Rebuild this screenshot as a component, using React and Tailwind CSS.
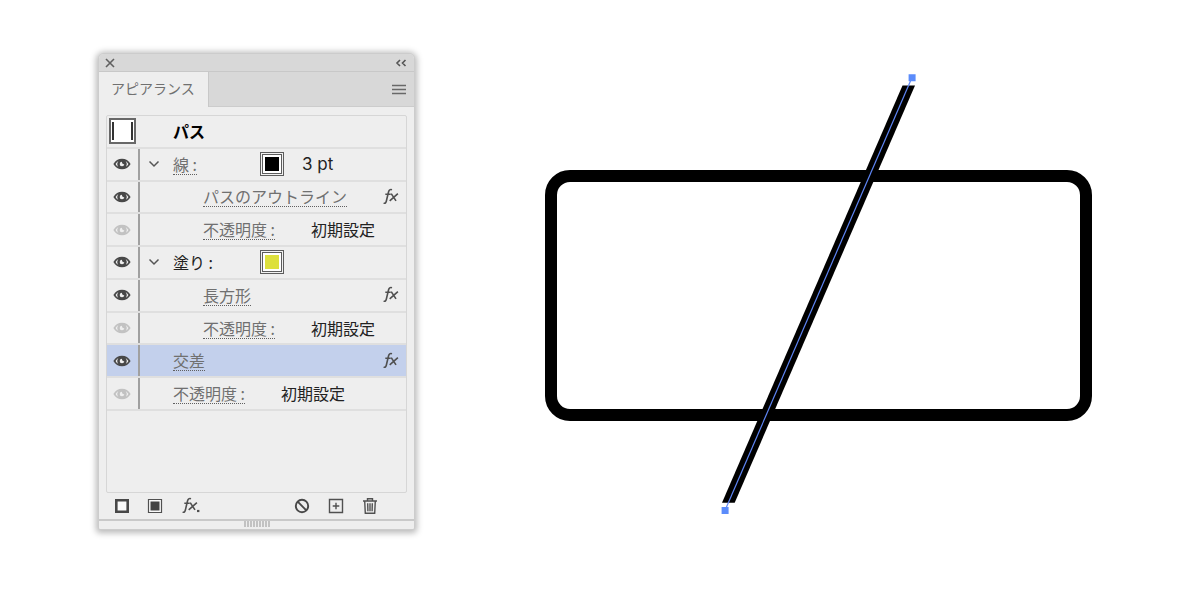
import React from "react";

const ROWS = [
  { id: "stroke", label: "線 :", visible: true, open: true, swatch: "bg-black", value: "3 pt" },
  { id: "outline", label: "パスのアウトライン", visible: true, nested: true, fx: true },
  { id: "stroke-opacity", label: "不透明度 :", visible: false, nested: true, value: "初期設定" },
  { id: "fill", label: "塗り :", visible: true, open: true, plain: true, swatch: "bg-[#dde03c]" },
  { id: "rectangle", label: "長方形", visible: true, nested: true, fx: true },
  { id: "fill-opacity", label: "不透明度 :", visible: false, nested: true, value: "初期設定" },
  { id: "intersect", label: "交差", visible: true, fx: true, selected: true },
  { id: "opacity", label: "不透明度 :", visible: false, value: "初期設定" },
];

function Eye({ visible }) {
  return (
    <svg viewBox="0 0 18 12" className={`h-3 w-[18px] ${visible ? "text-[#484848]" : "text-[#c2c2c2]"}`}>
      <path fill="currentColor" d="M.4 6C2.300 2.600 5.400.7 9 .7s6.700 1.900 8.600 5.300C15.700 9.400 12.600 11.300 9 11.300S2.300 9.400.4 6Z" />
      <path
        fill="#eeeeee"
        d="M2.600 6c.7-1.300 1.500-2.200 2.700-2.800a4.600 4.600 0 0 0 0 5.600C4.100 8.200 3.300 7.300 2.600 6ZM15.400 6c-.7-1.300-1.500-2.200-2.700-2.800a4.600 4.600 0 0 1 0 5.600c1.200-.6 2-1.500 2.700-2.800Z"
      />
      <path fill="#eeeeee" d="M9 3.700a2.300 2.300 0 1 0 2.300 2.500c-1.400.3-2.500-.8-2.300-2.500Z" />
    </svg>
  );
}

function Fx({ menu = false }) {
  return (
    <svg viewBox="0 0 20 20" className="size-5" fill="none" stroke="#505050" strokeWidth="1.600">
      <path d="M11 2.700C9.100 2 8 2.900 7.500 5L5.300 14.300c-.4 1.600-1.200 2.300-2.700 1.900M4.300 7.300h5.400" />
      <path d="M10.200 6.600 15 13.900M16.900 6.600 8.700 13.900" />
      {menu && <path d="M17 15h2.400" strokeWidth="2.200" />}
    </svg>
  );
}

function Swatch({ color, label }) {
  return (
    <button aria-label={label} className="size-6 shrink-0 border border-[#5c5c5c] bg-[#f2f2f2] p-px">
      <span className="block size-full border border-[#5c5c5c] bg-white p-0.5">
        <span className={`block size-full ${color}`} />
      </span>
    </button>
  );
}

function Row({ row }) {
  return (
    <li className={`flex border-b-2 border-[#dfdfdf] ${row.selected ? "bg-[#c3d0ec]" : ""}`}>
      <button
        aria-label={`表示 ${row.label}`}
        aria-pressed={row.visible}
        className="flex w-[33px] shrink-0 items-center justify-center border-r-2 border-[#a0a0a0] pr-px"
      >
        <Eye visible={row.visible} />
      </button>
      <div className={`relative flex min-w-0 flex-1 items-center pr-[5px] ${row.nested ? "pl-[63px]" : "pl-[33px]"}`}>
        {row.open && (
          <button aria-label="折りたたむ" className="absolute left-2 flex h-5 w-3 items-center">
            <svg viewBox="0 0 12 8" className="h-2 w-3" fill="none" stroke="#555555" strokeWidth="1.500">
              <path d="m1.500 1.500 4.500 4.500 4.500-4.500" />
            </svg>
          </button>
        )}
        <div className={row.swatch ? "w-[87px]" : row.value ? "w-[108px]" : ""}>
          <button
            className={`block border-b border-dotted text-base leading-5 whitespace-nowrap ${
              row.plain ? "border-transparent text-[#222222]" : "border-[#606060] text-[#707070]"
            }`}
          >
            {row.label}
          </button>
        </div>
        {row.swatch && <Swatch color={row.swatch} label={`${row.label} カラー`} />}
        {row.value && (
          <span
            className={`border-b border-transparent leading-5 whitespace-nowrap text-[#222222] ${
              row.swatch ? "pl-[18px] text-[17px] font-[Inter,'Noto_Sans_CJK_JP',sans-serif]" : "text-base"
            }`}
          >
            {row.value}
          </span>
        )}
        {row.fx && (
          <button aria-label="効果を編集" className="ml-auto">
            <Fx />
          </button>
        )}
      </div>
    </li>
  );
}

function TitleBar() {
  return (
    <div className="flex h-[17px] items-center justify-between px-[6px]">
      <button aria-label="閉じる">
        <svg viewBox="0 0 10 10" className="size-[10px]" stroke="#606060" strokeWidth="1.600">
          <path d="m1 1 8 8M9 1 1 9" />
        </svg>
      </button>
      <button aria-label="パネルを縮小" className="pr-px">
        <svg viewBox="0 0 12 8" className="h-2 w-3" fill="none" stroke="#555555" strokeWidth="1.600">
          <path d="M5 1 2 4l3 3M10.500 1l-3 3 3 3" />
        </svg>
      </button>
    </div>
  );
}

function Footer() {
  return (
    <div className="flex h-[26px] items-center pr-9 pl-[15px]">
      <div className="flex items-center gap-[17px]">
        <button aria-label="新規線を追加">
          <svg viewBox="0 0 16 16" className="size-4">
            <path d="M2.300 2.300h11.400v11.400h-11.400z" fill="#fafafa" stroke="#484848" strokeWidth="2.600" />
          </svg>
        </button>
        <button aria-label="新規塗りを追加">
          <svg viewBox="0 0 16 16" className="size-4">
            <path d="M1.500 1.500h13v13h-13z" fill="#fafafa" stroke="#505050" strokeWidth="1.200" />
            <path d="M3.500 3.500h9v9h-9z" fill="#444444" />
          </svg>
        </button>
        <button aria-label="新規効果を追加">
          <Fx menu />
        </button>
      </div>
      <div className="ml-auto flex items-center gap-[18px]">
        <button aria-label="アピアランスを消去">
          <svg viewBox="0 0 16 16" className="size-4" fill="none" stroke="#484848" strokeWidth="1.900">
            <circle cx="8" cy="8" r="6.200" />
            <path d="m3.700 3.700 8.600 8.600" />
          </svg>
        </button>
        <button aria-label="選択した項目を複製">
          <svg viewBox="0 0 16 16" className="size-4" fill="none" stroke="#505050" strokeWidth="1.400">
            <path d="M1.500 1.500h13v13h-13zM8 4.700v6.600M4.700 8h6.600" />
          </svg>
        </button>
        <button aria-label="選択した項目を削除">
          <svg viewBox="0 0 16 18" className="h-[18px] w-4" fill="none" stroke="#505050" strokeWidth="1.400">
            <path d="M1 4h14M5.500 4V1.800h5V4M2.700 4l.6 12.300h9.400L13.300 4M5.700 6.200l.2 8M8 6.200v8M10.300 6.200l-.2 8" />
          </svg>
        </button>
      </div>
    </div>
  );
}

function AppearancePanel() {
  return (
    <section className="w-[317px] shrink-0 overflow-hidden rounded-t-md rounded-b-xs border border-[#cccccc] bg-[#eeeeee] shadow-[0_1px_6px_2px_rgba(0,0,0,0.28)]">
      <header className="bg-[#d8d8d8]">
        <TitleBar />
        <div className="flex h-9 items-stretch border-t border-[#c8c8c8]">
          <button className="w-[110px] shrink-0 border-r border-[#c8c8c8] bg-[#eeeeee] pb-1 pl-3 text-left text-sm leading-5 whitespace-nowrap text-[#707070]">
            アピアランス
          </button>
          <div className="flex flex-1 items-center justify-end border-b border-[#cccccc] pr-2">
            <button aria-label="パネルメニュー">
              <svg viewBox="0 0 14 11" className="h-[11px] w-[14px]" stroke="#686868" strokeWidth="1.300">
                <path d="M0 1.500h14M0 5.500h14M0 9.500h14" />
              </svg>
            </button>
          </div>
        </div>
      </header>
      <div className="mx-[7px] mt-2 h-[378px] rounded-xs border border-[#d6d6d6]">
        <ul className="grid h-[295px] auto-rows-fr">
          <li className="flex items-center border-b-2 border-[#dfdfdf] pl-[2px]">
            <span className="flex h-[26px] w-[27px] shrink-0 justify-between border-2 border-[#686868] bg-white px-px py-0.5">
              <span className="w-0.5 bg-[#333333]" />
              <span className="w-0.5 bg-[#333333]" />
            </span>
            <strong className="pl-[37px] text-base leading-5 font-bold text-black">パス</strong>
          </li>
          {ROWS.map((row) => (
            <Row key={row.id} row={row} />
          ))}
        </ul>
      </div>
      <Footer />
      <div className="flex h-[10px] justify-center gap-px border-t-2 border-[#c9c9c9]">
        {Array.from({ length: 9 }, (_, i) => (
          <span key={i} className="h-[6px] w-0.5 bg-[#c2c2c2]" />
        ))}
      </div>
    </section>
  );
}

function Artboard() {
  return (
    <svg viewBox="545 70 547 446" className="mt-[17px] w-[547px] min-w-0" role="img" aria-label="パス">
      <rect x="551" y="176" width="535" height="239" rx="19" fill="none" stroke="#000000" strokeWidth="12" />
      <path d="M902.500 85.500h12.500L734.700 502.700H722Z" fill="#000000" />
      <path d="M912 77.500 725 510.500" stroke="#5f86f5" strokeWidth="1.200" />
      <path d="M908.600 74.300h7v7h-7zM721.600 507h7v7h-7z" fill="#5b8cfb" />
    </svg>
  );
}

export default function App() {
  return (
    <main className="flex min-h-screen items-start gap-[130px] bg-white pt-[53px] pr-6 pl-[98px] font-['Noto_Sans_CJK_JP',sans-serif]">
      <AppearancePanel />
      <Artboard />
    </main>
  );
}
